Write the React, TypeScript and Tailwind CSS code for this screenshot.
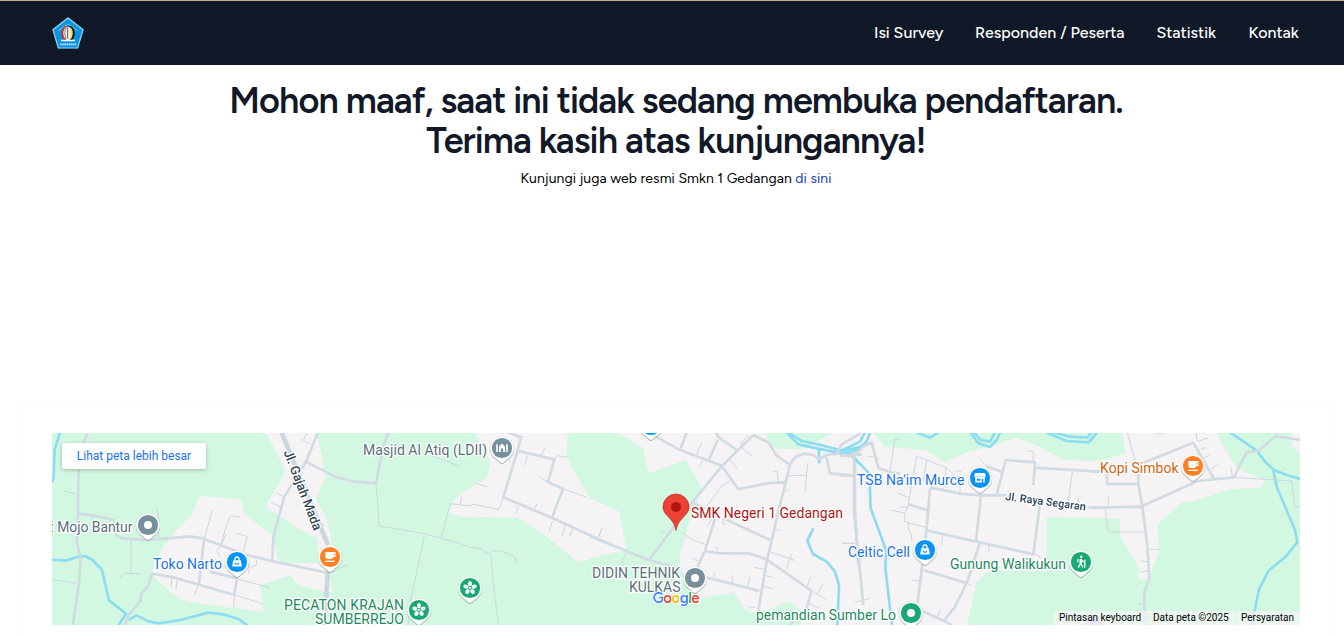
import React from "react";

const NAV = [
  { label: "Isi Survey", className: "w-[69px]" },
  { label: "Responden / Peserta", className: "w-[149.5px]" },
  { label: "Statistik", className: "w-[60px]" },
  { label: "Kontak", className: "w-[51px]" },
];

function Logo() {
  return (
    <svg className="h-8 w-8" viewBox="0 0 96 96" aria-label="Logo">
      <path d="M48 1 95 37 78 94H18L1 37Z" fill="#0b94dc" />
      <path d="M48 3 93 38 77 93H19L3 38Z" fill="none" stroke="#8fd3f3" strokeWidth="3.5" />
      <path d="M19 41 48 21 77 41" fill="none" stroke="#a9dcf5" strokeWidth="3" strokeDasharray="4 2" />
      <ellipse cx="41" cy="49" rx="13" ry="21" fill="#e02b2b" />
      <ellipse cx="54" cy="49" rx="14" ry="22" fill="#16181c" />
      <ellipse cx="48" cy="49" rx="14" ry="20" fill="#f3f1e8" />
      <path d="M42 32Q34 49 42 66" fill="none" stroke="#2d9d5c" strokeWidth="2.5" />
      <path d="M47 31V67" stroke="#6b4a9c" strokeWidth="3" />
      <path d="M55 33Q62 49 55 66" fill="none" stroke="#f0dc32" strokeWidth="4" />
      <path d="M25 68H41L48 64 55 68H71L67 73H29Z" fill="#f7f7f2" />
      <path d="M24 82H73" stroke="#c5e8f8" strokeWidth="5" strokeDasharray="5 1.5" />
    </svg>
  );
}

type Glyph = "dot" | "bag" | "cup" | "flower" | "mosque" | "shop" | "hike";

function PinGlyph({ kind }: { kind: Glyph }) {
  switch (kind) {
    case "bag":
      return (
        <g>
          <path d="M-3.800-1.800H3.800L4.800 4.600H-4.800Z" fill="#fff" />
          <path d="M-2-1.500V-3a2 2 0 0 1 4 0v1.500" fill="none" stroke="#fff" strokeWidth="1.3" />
          <path d="M-1.800 .6a1.800 1.800 0 0 0 3.600 0" fill="none" stroke="#0a93f5" strokeWidth="1.1" />
        </g>
      );
    case "cup":
      return (
        <g>
          <path d="M-4.600-5H5.600V0H3.200Q3.200 2-.6 2-4.600 2-4.600 0Z" fill="#fff" />
          <path d="M3.600-3.800H4.500V-1.400H3.600Z" fill="#ff8126" />
          <path d="M-4.800 4.300H4.800" stroke="#fff" strokeWidth="1.3" />
        </g>
      );
    case "flower":
      return (
        <g fill="#fff">
          {[0, 72, 144, 216, 288].map((a) => (
            <ellipse key={a} cx="0" cy="-4.3" rx="2" ry="2.6" transform={`rotate(${a})`} />
          ))}
          <circle r="1.1" />
        </g>
      );
    case "mosque":
      return (
        <path d="M-5.800 4V-3.200l.8-1.300 .8 1.300V4ZM4.200 4V-3.200L5-4.500l.8 1.300V4ZM-3 4V-1.200Q-2-3 0-4.600 2-3 3-1.200V4H1.200V1.500a1.200 1.200 0 0 0-2.400 0V4Z" fill="#fff" />
      );
    case "shop":
      return (
        <g>
          <path d="M-5-5H5L6-1.200H-6ZM-4.800-1H4.800V4.600H-4.800Z" fill="#fff" />
          <path d="M-3 .8H.4V2.800H-3ZM1.800 .8H3.300V4.600H1.800Z" fill="#0a93f5" />
        </g>
      );
    case "hike":
      return (
        <g stroke="#fff" fill="none" strokeWidth="1.3">
          <circle cx=".2" cy="-5.200" r="1.300" fill="#fff" stroke="none" />
          <path d="M0-3.200-.4 1" strokeWidth="2.400" />
          <path d="M-.4 1-2.600 5.600M-.2 1 1.800 5.600M.2-2.400 2.200-.4H4M-2.600-3.200-3.400 .4M3.800-2.200V5.800" />
        </g>
      );
    default:
      return <circle r="4" fill="#fff" />;
  }
}

function Pin({ x, y, color, kind }: { x: number; y: number; color: string; kind: Glyph }) {
  const body = "M0 15C-1.600 15-2.600 13.600-4.600 12L-8 9.200A12 12 0 1 1 8 9.200L4.600 12C2.600 13.600 1.600 15 0 15Z";
  return (
    <g transform={`translate(${x} ${y})`}>
      <path d={body} transform="translate(0 1)" fill="#5d6f66" fillOpacity=".45" />
      <path d={body} fill="#fff" stroke="#8fa098" strokeOpacity=".35" strokeWidth=".5" />
      <circle r="10.1" fill={color} />
      <PinGlyph kind={kind} />
    </g>
  );
}

const LABELS = [
  { text: ": Mojo Bantur", x: 50.5, y: 532, w: 82, color: "#5b6f79" },
  { text: "Toko Narto", x: 153, y: 569, w: 69, color: "#1a73e8" },
  { text: "Masjid Al Atiq (LDII)", x: 363, y: 455, w: 124, color: "#5b6f79" },
  { text: "PECATON KRAJAN", x: 284, y: 610, w: 120, color: "#1c8a5c" },
  { text: "SUMBERREJO", x: 315, y: 624, w: 89, color: "#1c8a5c" },
  { text: "DIDIN TEHNIK", x: 592, y: 578, w: 88, color: "#5b6f79" },
  { text: "KULKAS", x: 629, y: 592, w: 51.5, color: "#5b6f79" },
  { text: "SMK Negeri 1 Gedangan", x: 691, y: 518, w: 152, color: "#b31412" },
  { text: "pemandian Sumber Lo", x: 756, y: 620, w: 140, color: "#1c8a5c" },
  { text: "TSB Na'im Murce", x: 857, y: 485, w: 107.5, color: "#1a73e8" },
  { text: "Celtic Cell", x: 848, y: 557, w: 62, color: "#1a73e8" },
  { text: "Gunung Walikukun", x: 950, y: 569, w: 116, color: "#1c8a5c" },
  { text: "Kopi Simbok", x: 1100, y: 473, w: 78.5, color: "#d5620c" },
];

const PINS: { x: number; y: number; color: string; kind: Glyph }[] = [
  { x: 148, y: 525, color: "#78909c", kind: "dot" },
  { x: 237, y: 562, color: "#0a93f5", kind: "bag" },
  { x: 330, y: 557, color: "#ff8126", kind: "cup" },
  { x: 502, y: 448, color: "#78909c", kind: "mosque" },
  { x: 470, y: 588, color: "#18a974", kind: "flower" },
  { x: 419, y: 610, color: "#18a974", kind: "flower" },
  { x: 651, y: 425, color: "#0a93f5", kind: "dot" },
  { x: 695, y: 578, color: "#78909c", kind: "dot" },
  { x: 911, y: 613, color: "#18a974", kind: "dot" },
  { x: 980, y: 478, color: "#0a93f5", kind: "shop" },
  { x: 925, y: 550, color: "#0a93f5", kind: "bag" },
  { x: 1081, y: 562, color: "#18a974", kind: "hike" },
  { x: 1193, y: 466, color: "#ff8126", kind: "cup" },
];

/* Each tile is drawn at three times the map scale. */
const TILES = [
  {
    origin: "translate(0 400) scale(.33333)",
    water:
      "M181 95 162 155M164 150 161 235 154 248M154 479 195 482 232 471 255 468 278 480 306 510 327 601 378 641 355 677M385 660 410 646 445 664 478 670 540 660 625 638 670 643 718 658 742 677",
    major:
      "M264 95 240 160 235 240 234 340 230 425 242 475 236 560 218 677M236 341 290 348 345 362M345 402 365 415 443 420 500 415 570 409 610 416 740 465 820 484 985 519M455 521 520 532 700 584M457 521 443 562 424 580 422 602 385 645 374 677M612 420 597 550M630 515 711 535 703 585",
    minor:
      "M193 273 230 282M470 328 476 350V415M393 423V519M357 536 374 520 423 521M154 538 230 550M277 350V360M637 330 612 420M720 351 693 347 688 352 660 440M706 400 742 409 729 460M678 402 662 440 650 450 660 468M515 535 514 560M532 538 528 567M597 550 584 584M712 537 810 563M703 585 790 612M703 585 701 622M748 485 746 522M770 480V495L752 502",
  },
  {
    origin: "translate(230 430) scale(.33333)",
    water: "",
    major:
      "M265 5 228 95 163 200 145 265 130 320 127 392M228 95 320 142 375 155 438 160M475 5 458 60 438 160",
    minor:
      "M232 8 219 32 241 42M137 187 163 202M122 217 152 230M270 280 285 287M300 430 355 402M438 160 448 288 585 311 630 324M584 314 540 520 534 590",
  },
  {
    origin: "translate(340 425) scale(.33333)",
    water: "",
    major:
      "M545 32 530 85 490 217 635 278 815 360M495 18 545 38M536 78 643 104 624 171 669 191 636 278",
    minor:
      "M271 91 310 103 356 124M407 175 441 185M331 236 390 243 400 237 475 254 480 245 490 218M361 237 364 217M331 236 303 341 360 355 390 367 430 373 438 385 452 386 463 500 475 600M452 378 480 378 510 388 526 398 528 415M563 91 554 121M590 91 606 88 614 69M643 104 652 92 680 96M598 157 628 173M669 191 740 217M536 243 527 265M585 252 590 237M638 288 628 317M675 301 667 332M697 310 690 333M775 337 786 309M506 105 512 112",
  },
  {
    origin: "translate(590 425) scale(.33333)",
    water:
      "M595 22 635 48 700 62 760 78 815 65M590 22 625 58 680 70 750 84 810 88M686 68 688 115M670 310 652 347 669 387 710 410 735 440 747 480 742 600M812 120 785 90",
    major:
      "M170 22 225 50 265 73 395 122 445 192 540 174 584 172M290 22 272 70M375 22 390 40 440 75M383 45 357 103M490 30 397 122 300 240 175 408M490 30 535 52 560 92 600 120 570 240 530 410 498 600M600 118 615 97 640 86 665 88 690 102 708 90 755 85M708 90 720 145 790 151M740 85 755 58 812 25M770 96 800 85 815 90M795 95V260L805 420M0 333 175 405 270 430M310 235 345 250M400 280 540 345M375 280 345 378 320 430M345 378 380 384 480 386 530 403 665 498M350 458 400 470 508 498M665 498 650 548 600 600",
    minor:
      "M335 52 320 88M340 105 325 128M475 30 450 60M455 68 485 92M420 105 442 130M36 310 25 335M108 383 95 420M210 315 235 330 250 310M273 320 305 343 345 358M305 400 325 407M420 170 400 178 360 230 352 245M375 268 352 303M400 280 398 296 410 298M380 365 382 380M370 455 376 443M428 450 425 480M480 456 472 487M492 427 520 432M518 450 549 457M518 483 549 491M475 546 495 547M550 140H562L565 170M583 165 600 152 650 151M653 115 645 205M580 200 595 195M555 310 568 317M540 380 617 407M605 387 590 430M662 457 650 487M670 500 706 523M700 475 681 510M655 535 690 550M758 355H795",
  },
  {
    origin: "translate(840 425) scale(.33333)",
    water:
      "M0 78 30 65 60 50 75 22M0 88 50 75 80 50 90 22M38 95 88 145 92 250 138 375 136 430 156 600M230 22 270 38 295 22M390 20 415 55 450 66 470 45 482 20M400 20 422 45 450 50 465 22M618 22 680 48 745 52 770 22M640 22 690 35 742 38 755 22",
    major:
      "M0 92 45 89 70 65 95 52 115 128 150 142 180 145M42 89V260L70 540M270 187 360 206 420 211 500 211M270 190 260 310 232 540M205 238 268 257M260 316 420 352 580 388 600 235M423 210 408 350M420 352 382 470 345 545 310 590M252 436 382 475M240 555 300 582 335 600M470 210 497 105 585 112 580 180M440 124 485 140M585 128 780 140M745 247H800M0 151 40 151",
    minor:
      "M80 95H100M150 142 165 42 184 43M230 95 205 238 195 265 193 290M230 95 260 105 318 128 360 165M260 105 250 170M318 125 313 175M345 137 364 140M300 180 325 187M360 172V200M172 204 208 218M180 245 206 248M153 255 195 265M193 290 260 308M205 290V312L213 325 216 350M308 330 305 360M448 355 446 380M382 475 393 482M214 466 240 468M8 355H40M44 532 92 520M302 552 293 575M415 97 440 124M560 77 580 80 580 110M697 140 685 228M582 385 600 395V402M115 102H108V115M715 215V240",
  },
  {
    origin: "translate(1090 400) scale(.33333)",
    water:
      "M20 99 0 125M420 97 500 152 525 185 552 210 590 225 632 237M550 210 560 260 615 390 622 427 585 472 536 512 507 568 485 677",
    major:
      "M160 188 310 128 372 237M145 215V252L157 318 172 440 178 535 163 575 164 677M157 318 323 243 432 232 450 195 470 158 505 152 557 109 635 120M0 323 157 320M51 215V252H144M0 214H51",
    minor:
      "M112 99 145 215M55 290V317M45 325 55 393 62 396H165M178 447 211 449M152 483 173 485M152 516 173 513M145 611 162 612M318 99 321 123M324 124 354 114M332 148 348 143M342 174 361 165M362 207 386 193M423 205 427 230M432 232 605 243 615 320 635 320M170 652H190M557 109V99M196 99 205 103 215 99",
  },
];

function MapDrawing() {
  return (
    <svg className="block h-48 w-full" viewBox="52 433 1248 192" fontFamily="Roboto, sans-serif">
      <rect x="52" y="433" width="1248" height="192" fill="#f5f3f4" />
      <rect x="52" y="433" width="560" height="192" fill="#d3f8e2" />
      <path
        transform="translate(230 430) scale(.33333)"
        fill="#f5f3f4"
        d="M106 5 168 122 113 220 113 238 150 258 195 290 262 325 268 400 145 398 130 318 42 250 32 208-90 198-115 255-160 300-203 355-235 430-220 450-150 508-100 520 102 545 90 465 180 436 205 465 285 485 306 485 300 440 310 420 303 320 290 270 258 205 288 140 260 5Z"
      />
      <path
        transform="translate(340 425) scale(.33333)"
        fill="#f5f3f4"
        d="M400 18 440 90 452 110 440 158 350 215 335 235 327 265 365 275 530 277 620 335 713 410 820 385V18Z"
      />
      <path
        transform="translate(590 425) scale(.33333)"
        fill="#d3f8e2"
        d="M-67 20H75L130 50 160 70 175 145 287 105 335 190 298 290 270 390 272 430 330 520 430 502 465 555 500 568 600 528 640 565 632 605H0V400L108 375V365L88 260 0 220-5 215-70 95ZM525 20 535 60 560 72H640L700 40 735 20Z"
      />
      <path
        transform="translate(840 425) scale(.33333)"
        fill="#d3f8e2"
        d="M95 20 135 65 260 75 315 112 385 80 430 70 530 38 600 65 670 105 780 108 858 83 845 20ZM620 275 840 281 842 337 898 430 893 455 900 463 930 461 933 445 957 380 953 297 1030 230 1060 228 1135 205 1170 193 1265 187 1272 175 1270 163 1190 130 1125 20H1355V60L1380 85V605H382L385 580 410 470 448 437H620Z"
      />
      <circle cx="1094" cy="631" r="12" fill="#dcc5fb" />
      <g fill="none" strokeLinejoin="round">
        {TILES.map((t) => (
          <g key={t.origin} transform={t.origin}>
            <path d={t.water} stroke="#8edcf0" strokeWidth="8" />
            <path d={t.minor} stroke="#cbd7df" strokeWidth="3" />
            <path d={t.major} stroke="#d2dbe2" strokeWidth="8" />
          </g>
        ))}
        <path d="M281 431 328 545M328 570 324 626" stroke="#ccd6de" strokeWidth="4.6" />
      </g>

      {PINS.map((p) => (
        <Pin key={`${p.x}-${p.y}`} {...p} />
      ))}

      <g stroke="#fff" strokeWidth="2.6" strokeLinejoin="round" paintOrder="stroke">
        {LABELS.map((l) => (
          <text key={l.text} x={l.x} y={l.y} fill={l.color} fontSize="14" textLength={l.w}>
            {l.text}
          </text>
        ))}
        <text transform="translate(283.5 452) rotate(69)" fontSize="13" fontWeight="500" fill="#2f4656" textLength="85">
          Jl. Gajah Mada
        </text>
        <text transform="translate(1005 500) rotate(7.5)" fontSize="11" fontWeight="500" fill="#263f58" textLength="81">
          Jl. Raya Segaran
        </text>
      </g>

      <path
        d="M676 530.5C674.800 524 672 520.500 668.500 517 665 513.500 663 511 663 507A13 13 0 0 1 689 507C689 511 687 513.500 683.500 517 680 520.500 677.200 524 676 530.500Z"
        fill="#ea4335"
        stroke="#c5221f"
        strokeWidth=".7"
      />
      <circle cx="676" cy="507" r="5" fill="#b31412" />

      <text x="652.500" y="603" fontSize="15" fontWeight="600" textLength="47" fontFamily="Figtree, Lato, sans-serif" stroke="#fff" strokeWidth="1.5" paintOrder="stroke">
        <tspan fill="#4285f4">G</tspan>
        <tspan fill="#ea4335">o</tspan>
        <tspan fill="#fbbc04">o</tspan>
        <tspan fill="#4285f4">g</tspan>
        <tspan fill="#34a853">l</tspan>
        <tspan fill="#ea4335">e</tspan>
      </text>
    </svg>
  );
}

export default function App() {
  return (
    <div className="h-[637px] overflow-hidden bg-white font-['Figtree','Lato',sans-serif] text-black">
      <header className="flex h-[65px] items-center justify-between border-t border-[#c8b48c] bg-[#111827] pr-[44.5px] pl-[52px]">
        <Logo />
        <nav className="flex gap-8">
          {NAV.map((n) => (
            <a key={n.label} href="#" className={`text-base leading-6 font-medium whitespace-nowrap text-white ${n.className}`}>
              {n.label}
            </a>
          ))}
        </nav>
      </header>

      <main>
        <section className="h-[338px] pt-4 pl-2 text-center">
          <h1 className="text-[36px] leading-10 font-semibold tracking-tight text-[#111827]">
            Mohon maaf, saat ini tidak sedang membuka pendaftaran.
            <br />
            Terima kasih atas kunjungannya!
          </h1>
          <p className="mt-2 text-sm leading-5 tracking-[0.06px]">
            Kunjungi juga web resmi Smkn 1 Gedangan{" "}
            <a href="#" className="text-[#1e40af]">
              di sini
            </a>
          </p>
        </section>

        <section className="mr-2 ml-4 h-[260px] rounded-lg border border-[#fcfcfc] px-[35px] pt-[29px]">
          <div className="relative h-48 w-[1248px] overflow-hidden">
            <MapDrawing />
            <a
              href="#"
              className="absolute top-[10px] left-[10px] flex h-[26px] w-36 items-center justify-center rounded-[2px] bg-white font-['Roboto',sans-serif] text-xs text-[#1a73e8] shadow-[0_1px_4px_rgba(0,0,0,0.25)]"
            >
              Lihat peta lebih besar
            </a>
            <div className="absolute right-0 bottom-0 flex h-[14px] gap-px font-['Roboto',sans-serif] text-[10px] leading-[14px] whitespace-nowrap text-black">
              <span className="w-[93px] bg-[#f5f5f5]/70 pl-[5px]">Pintasan keyboard</span>
              <span className="w-[87px] bg-[#f5f5f5]/70 pl-[5px]">Data peta ©2025</span>
              <span className="w-[64px] bg-[#f5f5f5]/70 pl-[5px]">Persyaratan</span>
            </div>
          </div>
        </section>
      </main>
    </div>
  );
}
